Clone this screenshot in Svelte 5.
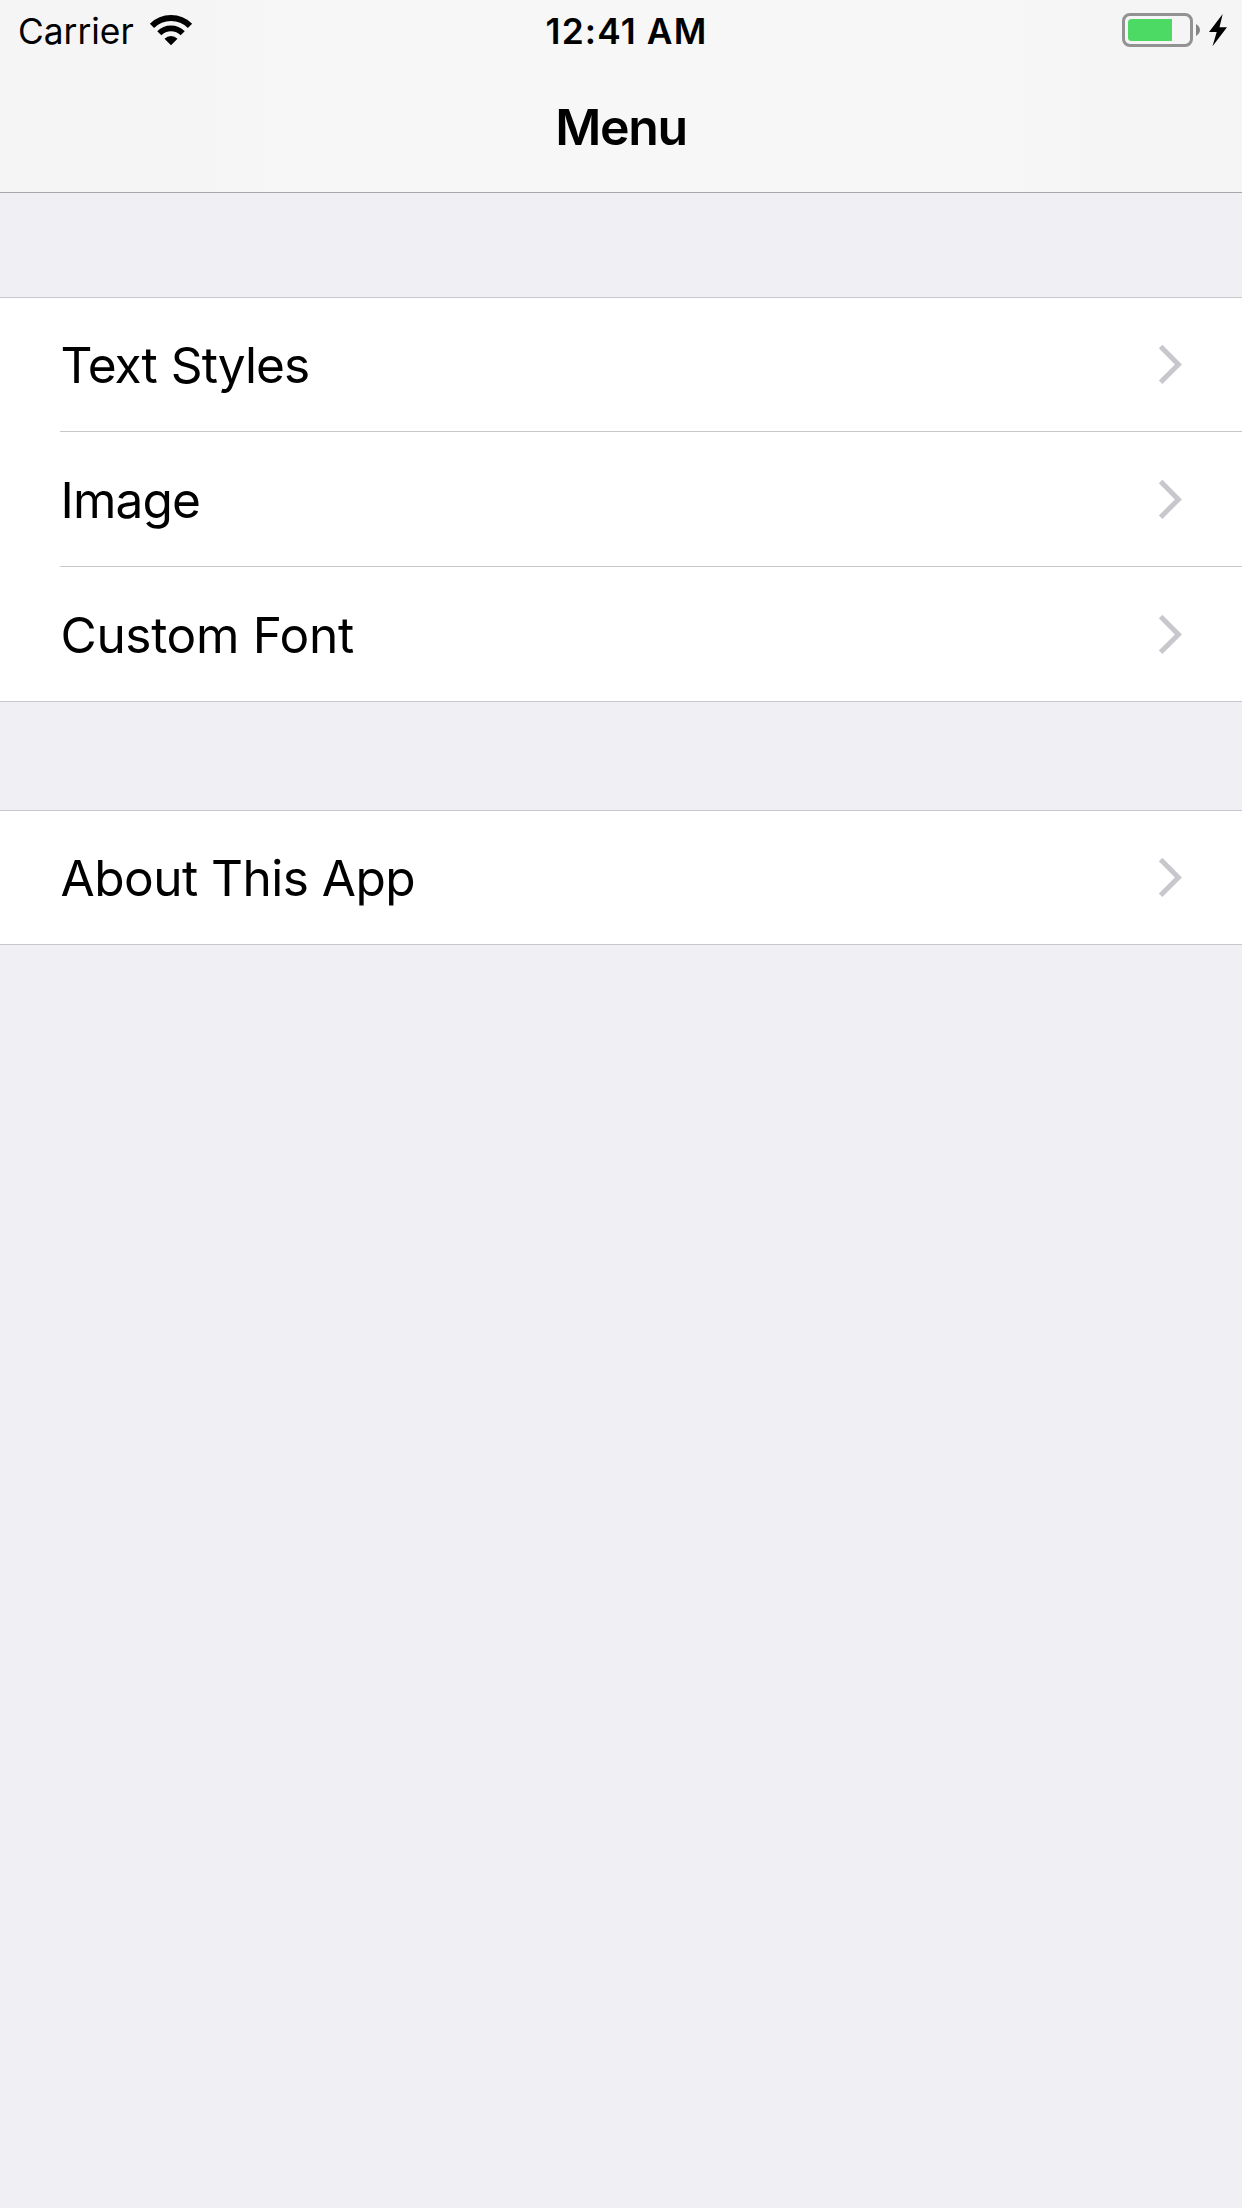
<script>
  const groups = [
    [
      { label: 'Text Styles', fit: 'tight' },
      { label: 'Image', fit: 'snug' },
      { label: 'Custom Font', fit: 'loose' },
    ],
    [{ label: 'About This App', fit: 'medium' }],
  ];
</script>

<div class="screen">
  <header>
    <div class="status">
      <div class="left">
        <span class="carrier">Carrier</span>
        <svg class="wifi" width="44" height="32" viewBox="149 14 44 32">
          <path d="M152 25.900A27 27 0 0 1 190 25.900" fill="none" stroke="#000" stroke-width="6" />
          <path d="M159.300 33.300A16.500 16.500 0 0 1 182.700 33.300" fill="none" stroke="#000" stroke-width="5.800" />
          <path d="M164.500 38.700A9.300 9.300 0 0 1 177.500 38.700L171 45.200Z" />
        </svg>
      </div>
      <span class="time">12:41 AM</span>
      <div class="right">
        <svg class="battery" width="108" height="36" viewBox="1121 12 108 36">
          <rect x="1123.500" y="14.500" width="68" height="31" rx="6.500" fill="none" stroke="#929292" stroke-width="3" />
          <path d="M1172 19v22h-40.500a3.500 3.500 0 0 1-3.500-3.500v-15a3.500 3.500 0 0 1 3.500-3.500Z" fill="#4cd964" />
          <path d="M1196 24c5.300 3 5.300 9 0 12Z" fill="#858585" />
          <path d="M1222.700 14L1209 32h7.700l-4.200 14.300L1227 27.300h-7.500Z" />
        </svg>
      </div>
    </div>
    <h1>Menu</h1>
  </header>

  {#each groups as rows}
    <ul>
      {#each rows as row}
        <li>
          <span class="label {row.fit}">{row.label}</span>
          <svg width="26" height="41" viewBox="0 0 26 41">
            <path d="M4.600 2.600L22.400 20.400L4.600 38.200" fill="none" stroke="#c7c7cc" stroke-width="5" />
          </svg>
        </li>
      {/each}
    </ul>
  {/each}
</div>

<style>
  :global(body) { background: #efeff4; }
  .screen {
    width: 1242px;
    height: 2208px;
    overflow: hidden;
    background: #efeff4;
    color: #000;
    font-family: Inter, "Liberation Sans", sans-serif;
  }
  header {
    box-sizing: border-box;
    height: 193px;
    background: linear-gradient(90deg, #f5f5f5, #f5f5f5 190px, #f7f7f7 330px, #f7f7f7 960px, #f5f5f5 1100px);
    border-bottom: 1px solid #a7a7aa;
  }
  .status {
    display: grid;
    grid-template-columns: 1fr auto 1fr;
    align-items: start;
    height: 60px;
    font-size: 35.300px;
    line-height: 61px;
    padding: 0 13px 0 18px;
    box-sizing: border-box;
  }
  .left { display: flex; align-items: flex-start; gap: 15px; }
  .right { display: flex; justify-content: flex-end; }
  .carrier, .time { padding-top: 1px; }
  .time { font-weight: 600; white-space: nowrap; padding-left: 6px; letter-spacing: 1.150px; }
  svg { display: block; }
  .wifi { margin-top: 14px; }
  .battery { margin-top: 12px; }
  h1 {
    margin: 37px 0 0;
    text-align: center;
    font-size: 50px;
    line-height: 60px;
    font-weight: 600;
    letter-spacing: -1.300px;
  }
  ul {
    list-style: none;
    margin: 104px 0 0;
    padding: 0;
    background: #fff;
    border-top: 1px solid #c8c7cc;
    border-bottom: 1px solid #c8c7cc;
  }
  ul + ul { margin-top: 108px; }
  li {
    display: flex;
    align-items: center;
    justify-content: space-between;
    height: 133px;
    margin-left: 60px;
    padding-right: 60px;
  }
  li + li { padding-top: 1px; border-top: 1px solid #c8c7cc; }
  .label { padding: 1px 0 0 0.500px; font-size: 49.600px; line-height: 60px; }
  .tight { letter-spacing: -1px; word-spacing: 1.200px; }
  .snug { letter-spacing: -0.850px; }
  .loose { letter-spacing: -0.350px; }
  .medium { letter-spacing: -0.540px; }
</style>
